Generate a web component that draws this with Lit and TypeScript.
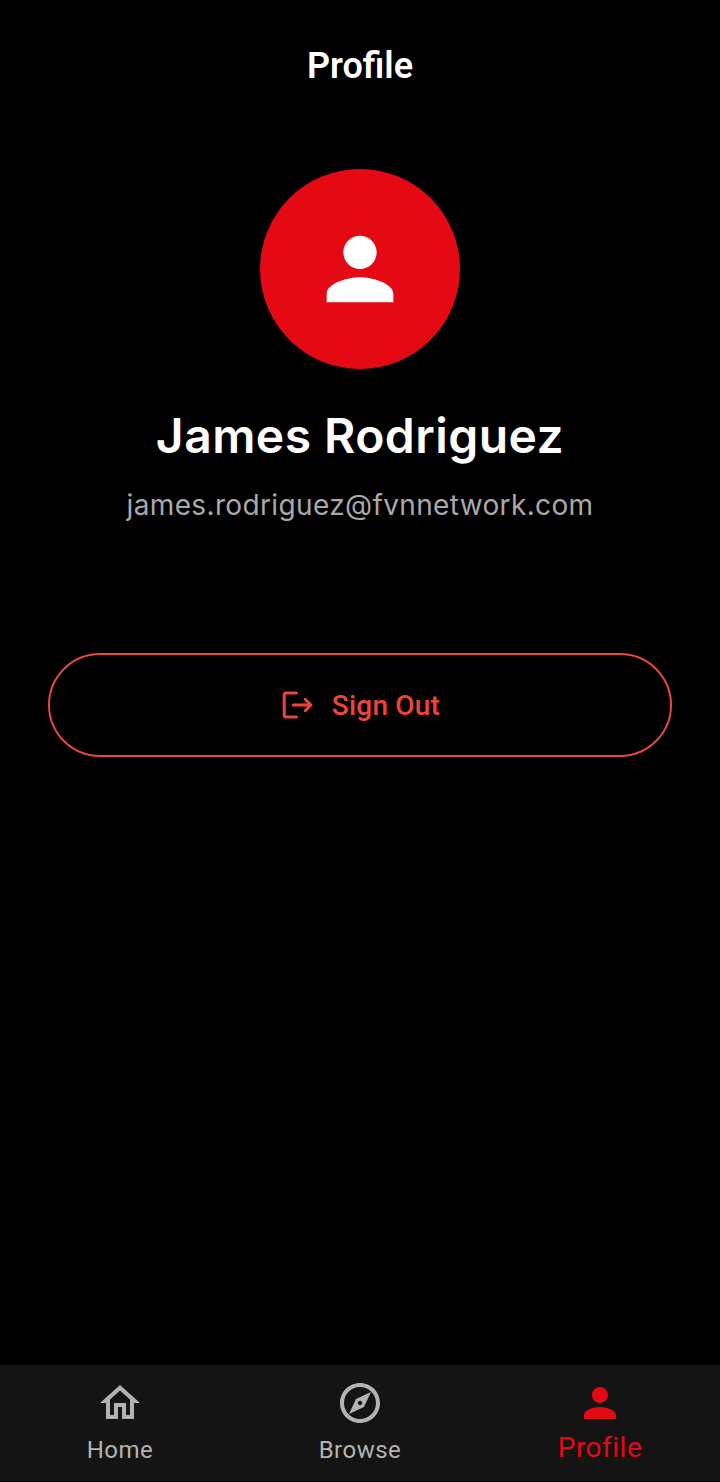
import { LitElement, html, css, svg } from "lit";
import { customElement } from "lit/decorators.js";

const PERSON = svg`<path d="M12 12c2.21 0 4-1.79 4-4s-1.79-4-4-4-4 1.79-4 4 1.79 4 4 4zm0 2c-2.67 0-8 1.34-8 4v2h16v-2c0-2.66-5.33-4-8-4z"/>`;

@customElement("app-root")
export class AppRoot extends LitElement {
  static styles = css`
    :host { display: flex; flex-direction: column; box-sizing: border-box; height: 1482px; width: 100%; background: #000; color: #fff; font-family: Roboto, sans-serif; }
    svg { display: block; fill: currentColor; flex: none; }
    header { height: 129px; flex: none; text-align: center; }
    h1 { margin: 0; padding-top: 45px; font-size: 36px; line-height: 43px; font-weight: 580; }
    main { flex: 1; display: flex; flex-direction: column; align-items: center; padding: 40px 48px 0; }
    .avatar { width: 200px; height: 200px; flex: none; border-radius: 50%; background: #e50914; display: flex; align-items: center; justify-content: center; }
    h2 { margin: 37px 0 0; font: 600 48px/60px Inter, sans-serif; letter-spacing: .45px; white-space: nowrap; }
    .mail { margin: 19px 0 0; font: 400 28px/40px Inter, sans-serif; letter-spacing: .36px; color: #a9a9a9; white-space: nowrap; }
    .out { margin-top: 128px; width: 100%; height: 104px; box-sizing: border-box; border: 2px solid #e8483f; border-radius: 52px; background: none; color: #ec463b; display: flex; align-items: center; justify-content: center; gap: 16px; padding: 0; font: 500 28px/40px Roboto, sans-serif; letter-spacing: .2px; }
    .out span { padding-top: 2px; }
    nav { height: 116px; flex: none; display: grid; grid-template-columns: repeat(3, 1fr); background: #141414; border-bottom: 1px solid #000; }
    .tab { display: flex; flex-direction: column; align-items: center; padding-top: 14px; color: #b3b3b3; font-size: 24px; line-height: 30px; letter-spacing: .5px; }
    .tab span { margin-top: 8px; }
    .on { color: #e50914; font-size: 28px; }
    .on span { margin-top: 6px; }
  `;
  render() {
    return html`
      <header><h1>Profile</h1></header>
      <main>
        <div class="avatar"><svg width="100" height="100" viewBox="0 0 24 24">${PERSON}</svg></div>
        <h2>James Rodriguez</h2>
        <p class="mail">james.rodriguez@fvnnetwork.com</p>
        <button class="out"><svg width="36" height="36" viewBox="0 0 24 24"><path d="M11 4H4c-.7 0-1.2.5-1.2 1.2v13.6c0 .7.5 1.2 1.2 1.2h7M8.8 12h11.8M16.8 8.2l3.8 3.8-3.8 3.8" fill="none" stroke="currentColor" stroke-width="2" stroke-linecap="round" stroke-linejoin="round"/></svg><span>Sign Out</span></button>
      </main>
      <nav>
        <div class="tab"><svg width="48" height="48" viewBox="0 0 24 24"><path d="M12 5.69l5 4.5V18h-2v-6H9v6H7v-7.81l5-4.5M12 3L2 12h3v8h6v-6h2v6h6v-8h3L12 3z"/></svg><span>Home</span></div>
        <div class="tab"><svg width="48" height="48" viewBox="0 0 24 24"><path d="M12 2C6.48 2 2 6.48 2 12s4.48 10 10 10 10-4.48 10-10S17.52 2 12 2zm0 18c-4.41 0-8-3.59-8-8s3.59-8 8-8 8 3.59 8 8-3.59 8-8 8zm-5.5-2.5l7.51-3.49L17.5 6.5 9.99 9.99 6.5 17.5zm5.5-6.6c.61 0 1.1.49 1.1 1.1s-.49 1.1-1.1 1.1-1.1-.49-1.1-1.1.49-1.1 1.1-1.1z"/></svg><span>Browse</span></div>
        <div class="tab on"><svg width="48" height="48" viewBox="0 0 24 24">${PERSON}</svg><span>Profile</span></div>
      </nav>`;
  }
}
